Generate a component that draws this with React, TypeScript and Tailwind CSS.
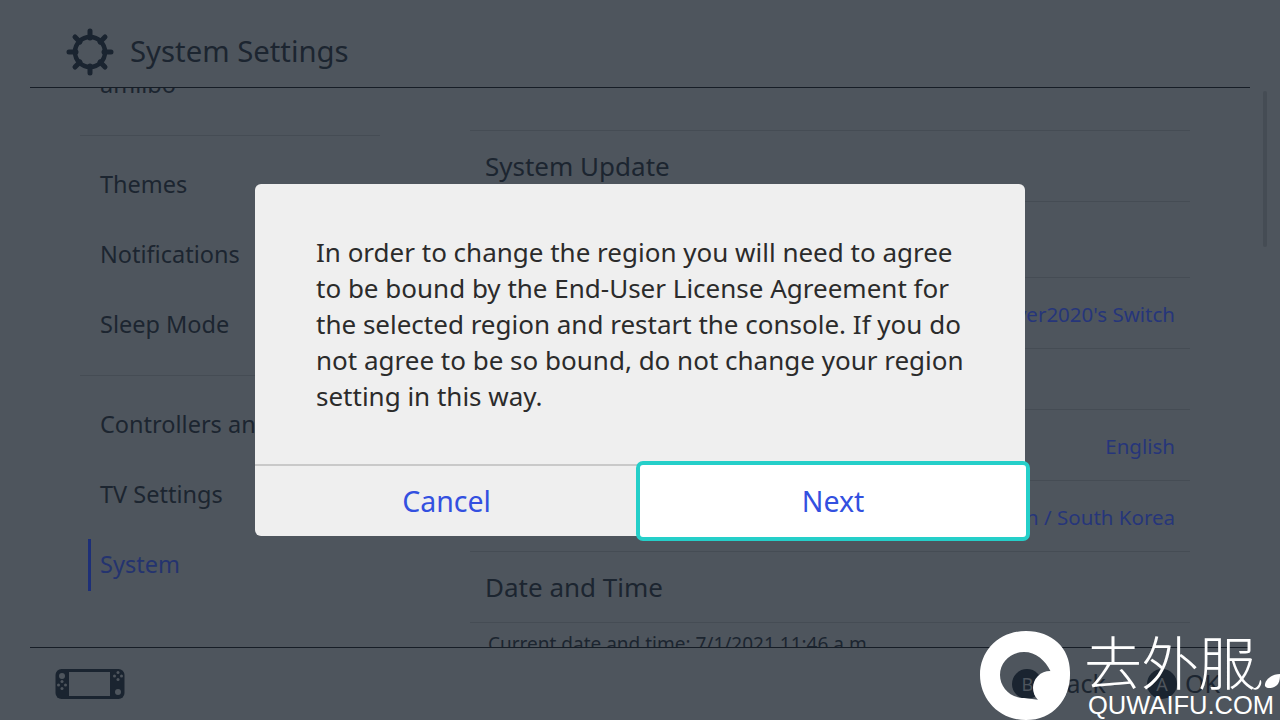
const font = { fontFamily: '"Noto Sans", "Noto Sans CJK SC", sans-serif' };

const Gear = () => (
  <svg width="48" height="48" viewBox="0 0 48 48" className="text-[#1a2430]">
    <circle cx="24" cy="24" r="15" fill="none" stroke="currentColor" strokeWidth="4.500" />
    <g stroke="currentColor" strokeWidth="5" strokeLinecap="round">
      <path d="M24 3v7M24 38v7M3 24h7M38 24h7M9 9l5 5M34 34l5 5M9 39l5-5M34 14l5-5" />
    </g>
  </svg>
);

const Handheld = () => (
  <svg width="70" height="32" viewBox="0 0 70 32">
    <rect x="0.500" y="1" width="69" height="30" rx="6" fill="#1a2430" />
    <rect x="14" y="4" width="41" height="24" fill="#4e555d" />
    <circle cx="7" cy="8" r="3" fill="#4e555d" />
    <circle cx="63" cy="24" r="3" fill="#4e555d" />
    {[[7, 17], [63, 8]].map(([x, y]) => (
      <g key={x} fill="#4e555d">
        <circle cx={x} cy={y - 3.500} r="1.500" />
        <circle cx={x} cy={y + 3.500} r="1.500" />
        <circle cx={x - 3.500} cy={y} r="1.500" />
        <circle cx={x + 3.500} cy={y} r="1.500" />
      </g>
    ))}
  </svg>
);

const SideItem = ({ label, active }: { label: string; active?: boolean }) => (
  <div className="relative flex h-[70px] items-center whitespace-nowrap pl-5 text-[23.500px]">
    {active && <span className="absolute left-2 top-[9px] h-[52px] w-[3px] bg-[#1d2f78]" />}
    <span className={active ? "text-[#24336f]" : "text-[#1c2530]"}>{label}</span>
  </div>
);

const Row = ({ label, value, h }: { label?: string; value?: string; h: string }) => (
  <div className={`flex items-center justify-between border-b border-[#454c54] px-[15px] ${h}`}>
    <span className="text-[26px] text-[#1c2530]">{label}</span>
    {value && <span className="pt-[3px] text-[20.500px] text-[#26357a]">{value}</span>}
  </div>
);

const Hint = ({ k, label }: { k: string; label: string }) => (
  <div className="flex items-center gap-2">
    <span className="flex h-[30px] w-[30px] items-center justify-center rounded-full bg-[#1a2430] text-[18px] text-[#4e555d]">
      {k}
    </span>
    <span className="text-[25px] text-[#1c2530]">{label}</span>
  </div>
);

const Watermark = () => (
  <div className="absolute bottom-0 right-0 flex h-[90px] w-[300px] items-start gap-[12px] overflow-hidden">
    <svg width="92" height="90" viewBox="0 0 92 90" className="shrink-0">
      <path
        fillRule="evenodd"
        d="M46 1C72 1 90 18 90 42C91 68 74 90 46 90C18 90 0 68 0 45C0 20 20 1 46 1ZM44 22C31 22 20 32 20 45C20 57 30 68 44 68L60 70L71 42C65 30 56 22 44 22Z"
        fill="#fff"
      />
      <circle cx="70" cy="58" r="17" fill="#fff" />
    </svg>
    <div className="relative flex flex-col whitespace-nowrap text-white">
      <span
        className="h-[60px] text-[58px] font-light leading-[60px] tracking-[-1px]"
        style={{ fontFamily: '"Noto Sans CJK SC", sans-serif' }}
      >
        去外服
      </span>
      <span
        className="ml-[4px] text-[25.500px] leading-[30px]"
        style={{ fontFamily: '"Liberation Sans", sans-serif' }}
      >
        QUWAIFU.COM
      </span>
    </div>
    <svg width="30" height="20" viewBox="0 0 30 20" className="absolute right-0 top-[42px]">
      <path d="M30 2C22 2 14 8 15 14C16 17 24 17 28 12C30 9 30 5 30 2Z" fill="#fff" />
      <path d="M2 16C6 17 9 14 10 8C12 8 12 14 8 17C6 18 3 18 2 16Z" fill="#fff" />
    </svg>
  </div>
);

export default function App() {
  return (
    <div className="relative h-[720px] w-[1280px] overflow-hidden bg-[#4e555d]" style={font}>
      <header className="mx-[30px] flex h-[88px] items-center gap-[16px] border-b border-[#161d26] pl-[36px] pt-[16px]">
        <Gear />
        <h1 className="text-[29.300px] text-[#1c2530]">System Settings</h1>
      </header>

      <main className="flex h-[559px] overflow-hidden">
        <aside className="ml-[80px] w-[300px] shrink-0">
          <div className="-mt-[27px]">
            <div className="flex h-[47px] items-center pl-5 text-[23.500px] text-[#1c2530]">amiibo</div>
          </div>
          <div className="mb-[14px] border-b border-[#454c54] pt-[27px]" />
          <SideItem label="Themes" />
          <SideItem label="Notifications" />
          <SideItem label="Sleep Mode" />
          <div className="mb-[14px] mt-[15px] border-b border-[#454c54]" />
          <SideItem label="Controllers and Sensors" />
          <SideItem label="TV Settings" />
          <SideItem label="System" active />
        </aside>

        <section className="ml-[90px] w-[720px]">
          <div className="h-[43px] border-b border-[#454c54]" />
          <Row label="System Update" h="h-[71px]" />
          <Row h="h-[76px]" />
          <Row label="Console Nickname" value="Player2020's Switch" h="h-[71px]" />
          <Row h="h-[61px]" />
          <Row label="Language" value="English" h="h-[71px]" />
          <Row label="Region" value="Hong Kong / Taiwan / South Korea" h="h-[71px]" />
          <Row label="Date and Time" h="h-[71px]" />
          <p className="pl-[18px] pt-[7px] text-[19px] text-[#1c2530]">
            Current date and time: 7/1/2021 11:46 a.m.
          </p>
        </section>

        <div className="ml-[73px] mt-[3px] h-[156px] w-[4px] rounded-full bg-[#454c54]" />
      </main>

      <footer className="mx-[30px] flex h-[73px] items-center justify-between border-t border-[#161d26] pl-[25px] pr-[30px]">
        <Handheld />
        <div className="flex items-center gap-[41px]">
          <Hint k="B" label="Back" />
          <Hint k="A" label="OK" />
        </div>
      </footer>

      <div className="absolute left-[255px] top-[184px] flex h-[352px] w-[770px] flex-col rounded-[6px] bg-[#efefef]">
        <div className="h-[282px] border-b-2 border-[#c9c9c9] px-[61px] pt-[50px] text-[26px] leading-[36px] text-[#2b2b2b]">
          In order to change the region you will need to agree to be bound by the End-User License
          Agreement for the selected region and restart the console. If you do not agree to be so
          bound, do not change your region setting in this way.
        </div>
        <div className="flex flex-1 items-center">
          <button className="w-[383px] text-center text-[28.500px] text-[#3350e0]">Cancel</button>
        </div>
        <button className="absolute left-[381px] top-[277px] h-[80px] w-[394px] rounded-[7px] border-[4px] border-[#25cfc9] bg-white text-[28.500px] text-[#3350e0]">
          Next
        </button>
      </div>

      <Watermark />
    </div>
  );
}
